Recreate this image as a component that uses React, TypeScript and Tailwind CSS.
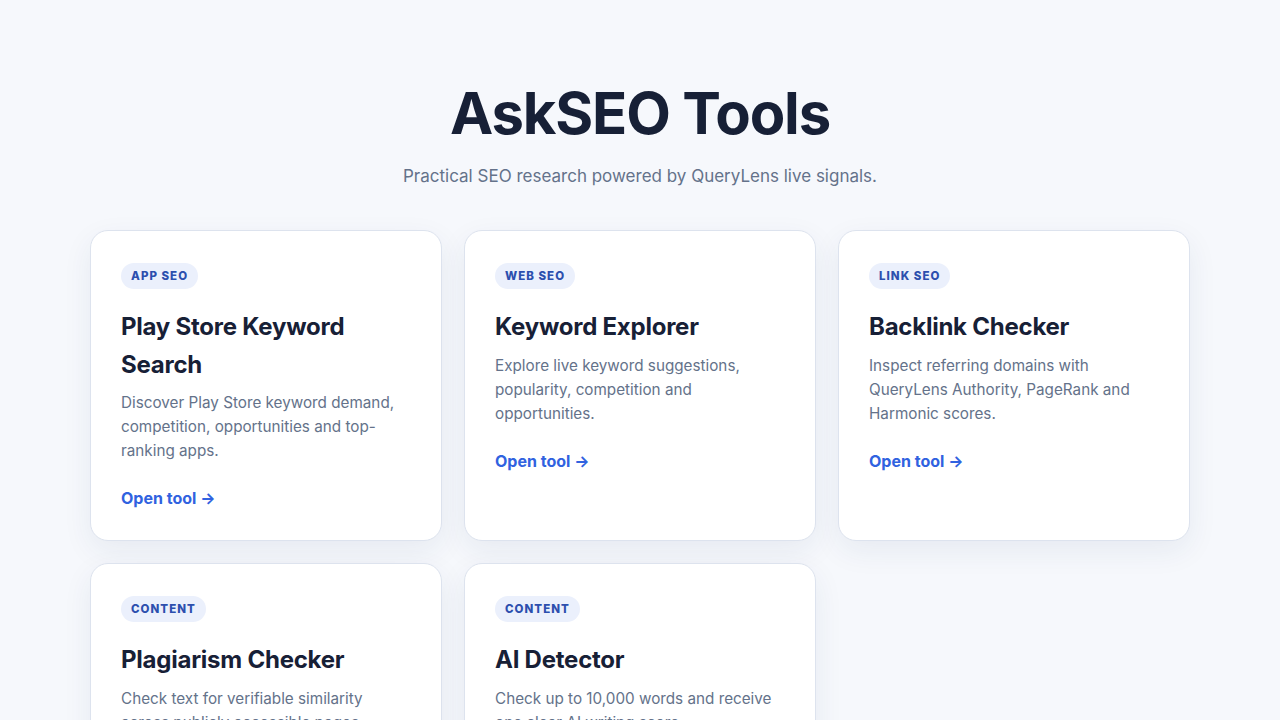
import React from "react";

type Tool = { tag: string; title: string; desc: string };

const tools: Tool[] = [
  {
    tag: "APP SEO",
    title: "Play Store Keyword Search",
    desc: "Discover Play Store keyword demand, competition, opportunities and top-ranking apps.",
  },
  {
    tag: "WEB SEO",
    title: "Keyword Explorer",
    desc: "Explore live keyword suggestions, popularity, competition and opportunities.",
  },
  {
    tag: "LINK SEO",
    title: "Backlink Checker",
    desc: "Inspect referring domains with QueryLens Authority, PageRank and Harmonic scores.",
  },
  {
    tag: "CONTENT",
    title: "Plagiarism Checker",
    desc: "Check text for verifiable similarity across publicly accessible pages.",
  },
  {
    tag: "CONTENT",
    title: "AI Detector",
    desc: "Check up to 10,000 words and receive one clear AI writing score.",
  },
];

function Card({ t }: { t: Tool }) {
  return (
    <div className="flex flex-col items-start rounded-[18px] border border-[#dde3ee] bg-white px-[30px] pt-[32px] pb-[30px] shadow-[0_10px_30px_rgba(30,50,100,0.07)]">
      <span className="rounded-full bg-[#ebf0fc] px-[10px] py-[6px] text-[11.5px] font-extrabold leading-[14px] tracking-[0.09em] text-[#2c4fae]">
        {t.tag}
      </span>
      <h2 className="mt-[19px] text-[24px] font-bold leading-[37.5px] tracking-[-0.01em] text-[#172036]">
        {t.title}
      </h2>
      <p className="mt-[8px] text-[15.25px] leading-[24px] text-[#64728a]">{t.desc}</p>
      <a className="mt-[23px] text-[16px] font-bold leading-[24px] text-[#3062e0]" href="#">
        Open tool →
      </a>
    </div>
  );
}

export default function App() {
  return (
    <div
      className="min-h-screen bg-[#f6f8fc]"
      style={{ fontFamily: "Inter, 'Noto Sans', sans-serif" }}
    >
      <div className="mx-auto w-[1100px] pt-[78px] pb-16">
        <h1 className="text-center text-[58px] font-bold leading-[70px] tracking-[-0.02em] text-[#172036]">
          AskSEO Tools
        </h1>
        <p className="mt-[14px] text-center text-[17px] leading-[28px] text-[#64728a]">
          Practical SEO research powered by QueryLens live signals.
        </p>
        <div className="mt-[40px] grid grid-cols-3 gap-x-[22px] gap-y-[22px]">
          {tools.map((t, i) => (
            <Card key={i} t={t} />
          ))}
        </div>
      </div>
    </div>
  );
}
